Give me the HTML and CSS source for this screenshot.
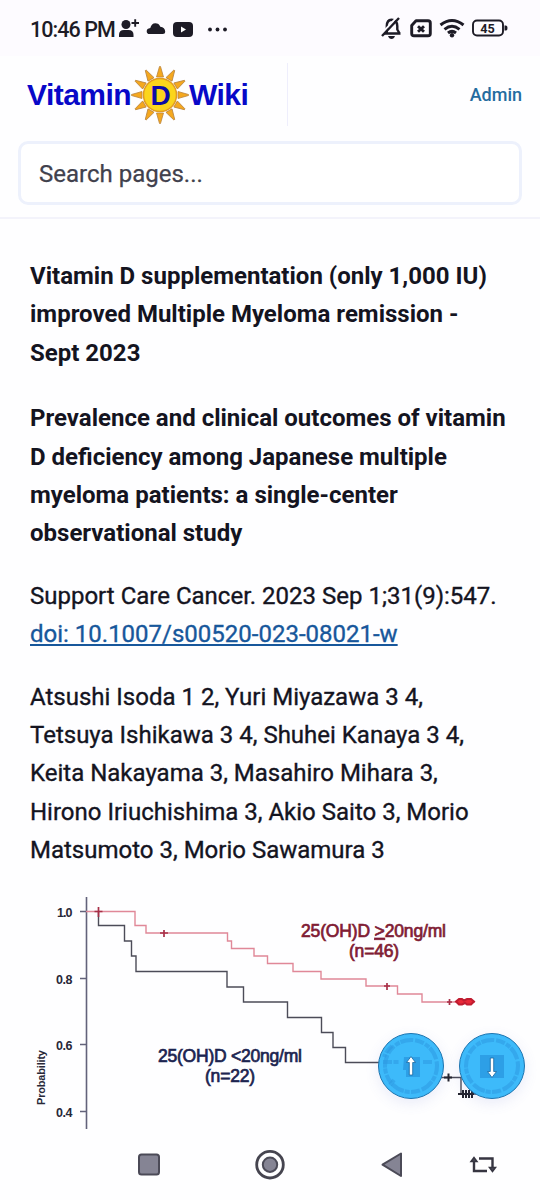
FILE: index.html
```html
<!DOCTYPE html>
<html lang="en">
<head>
    <meta charset="UTF-8">
    <meta name="viewport" content="width=device-width, initial-scale=1.0">
    <title>Vitamin D Wiki</title>
    <link rel="stylesheet" href="styles.css">
</head>
<body>
    <div class="status-bar">
        <span class="clock">10:46 PM</span>
        <svg class="status-left" width="112" height="24" viewBox="117 17 112 24">
            <circle cx="126" cy="24.500" r="4.500"/>
            <path d="M119 37v-2q0-5 5-5h4.500q5 0 5 5v2z"/>
            <path class="line thin" d="M131.500 23h7.500M135.200 19.200v7.600"/>
            <path d="M149.500 34q-2.800 0-2.800-2.800q0-2.700 3.600-3.200q1.200-4.700 5-4.700q3.700 0 5 3.400q4.700.6 4.900 4.800q0 2.500-2.500 2.500z"/>
            <rect x="173" y="22" width="20" height="15" rx="4"/>
            <path class="play" d="M181 26.500v6l5-3z"/>
            <circle cx="210" cy="29.500" r="1.900"/>
            <circle cx="217.500" cy="29.500" r="1.900"/>
            <circle cx="225" cy="29.500" r="1.900"/>
        </svg>
        <svg class="status-right" width="130" height="26" viewBox="380 17 130 26">
            <path class="line" d="M384 34.500h16.500M386.800 34v-7q0-6 4.700-6.300q5.500 0 5.800 6.300v3.500l2.300 4"/>
            <path d="M388 37h7q-1 3-3.500 3t-3.500-3z"/>
            <path class="gap" d="M381 35.500L397 18"/>
            <path class="line" d="M382 37L399 19"/>
            <path class="line bold" d="M416 21.800h12q2.300 0 2.300 2.300v10.400q0 2.300-2.300 2.300h-14q-2.300 0-2.300-2.300v-8z"/>
            <path class="line bold" d="M418 27.300l6 5.500M424 27.300l-6 5.500"/>
            <path class="wifi" d="M440.500 26q11.500-9 23 0M444.500 30.300q7.500-6 15 0M448 34q4-3.200 8 0"/>
            <circle cx="452" cy="36.200" r="2.200"/>
            <rect class="line thin" x="473" y="21.500" width="30" height="15" rx="4"/>
            <path d="M504.500 26.500h1.500q1.500 0 1.500 2.500t-1.500 2.500h-1.500z"/>
            <text x="480.300" y="33.800" textLength="14.500" lengthAdjust="spacingAndGlyphs">45</text>
        </svg>
    </div>

    <header class="site-header">
        <div class="top-row">
            <a class="logo" href="#">
                <span class="logo-vitamin">Vitamin</span>
                <svg class="sun" width="58" height="60" viewBox="-29 -30 58 60">
                    <defs><path id="ray" d="M-3.500-18L-.5-28.500L.5-28.500L3.500-18z"/></defs>
                    <g class="rays">
                        <use href="#ray"/>
                        <use href="#ray" transform="rotate(30)"/>
                        <use href="#ray" transform="rotate(60)"/>
                        <use href="#ray" transform="rotate(90)"/>
                        <use href="#ray" transform="rotate(120)"/>
                        <use href="#ray" transform="rotate(150)"/>
                        <use href="#ray" transform="rotate(180)"/>
                        <use href="#ray" transform="rotate(210)"/>
                        <use href="#ray" transform="rotate(240)"/>
                        <use href="#ray" transform="rotate(270)"/>
                        <use href="#ray" transform="rotate(300)"/>
                        <use href="#ray" transform="rotate(330)"/>
                    </g>
                    <circle class="disc" r="16.500"/>
                    <text x=".5" y="9.500" text-anchor="middle">D</text>
                </svg>
                <span class="logo-wiki">Wiki</span>
            </a>
            <a class="admin" href="#">Admin</a>
        </div>
        <input class="search" type="text" placeholder="Search pages...">
    </header>

    <main class="content">
        <h1>Vitamin D supplementation (only 1,000 IU)<br>improved Multiple Myeloma remission -<br>Sept 2023</h1>
        <h2>Prevalence and clinical outcomes of vitamin<br>D deficiency among Japanese multiple<br>myeloma patients: a single-center<br>observational study</h2>
        <p class="source">Support Care Cancer. 2023 Sep 1;31(9):547.<br><a href="#">doi: 10.1007/s00520-023-08021-w</a></p>
        <p class="authors">Atsushi Isoda 1 2, Yuri Miyazawa 3 4,<br>Tetsuya Ishikawa 3 4, Shuhei Kanaya 3 4,<br>Keita Nakayama 3, Masahiro Mihara 3,<br>Hirono Iriuchishima 3, Akio Saito 3, Morio<br>Matsumoto 3, Morio Sawamura 3</p>
    </main>

    <div class="figure">
        <svg class="chart" width="540" height="260" viewBox="0 880 540 260">
            <path class="axis" d="M86.500 897v232M80 911.500h6M80 978.500h6M80 1044.500h6M80 1111.500h6"/>
            <g class="ticks">
                <text x="57" y="917" textLength="15.500">1.0</text>
                <text x="56" y="984" textLength="16.500">0.8</text>
                <text x="56" y="1050" textLength="16.500">0.6</text>
                <text x="56" y="1117" textLength="16.500">0.4</text>
            </g>
            <text class="y-title" transform="translate(45 1105) rotate(-90)" textLength="55">Probability</text>

            <!-- low vitamin D group -->
            <path class="low" d="M98.500 911V925.500H124.500V941H131.500V956H136V971.500H227V987H243.500V1002H287.500V1017.500H321.500V1032.500H333V1047.500H345.500V1062.500H415V1077.500H461V1094H476"/>
            <path class="low-marks" d="M448.500 1073.500v8M444 1077.500h8M463 1090v8M466 1090v8M469 1090v8M472 1090v8M458 1094h16"/>

            <!-- high vitamin D group -->
            <path class="high" d="M86 911.500H135V925.500H146V933H227.500V941H231.500V948.500H254V956H267.500V963.500H293V971.500H321V979H366V986H397.500V994H422V1002H475"/>
            <path class="high-marks" d="M98.500 907v10M94.500 911.500h8M164 930v7M160 933h8M387 983v7M384 986h6M449.500 999v6M447 1002h5"/>
            <path class="high-end" d="M456 1001.500l3-2.500h3l2 1.500l3-1.500h4l3 2.500l-3 3h-4l-2-1.500l-3 1.500h-3z"/>

            <text class="label high-label" x="301" y="937" textLength="145">25(OH)D <tspan text-decoration="underline">&gt;</tspan>20ng/ml</text>
            <text class="label high-label" x="349" y="957" textLength="50">(n=46)</text>
            <text class="label low-label" x="158" y="1062" textLength="144">25(OH)D &lt;20ng/ml</text>
            <text class="label low-label" x="205" y="1082" textLength="50">(n=22)</text>
        </svg>
        <div class="scroll-buttons">
            <button class="scroll-button" aria-label="Scroll up">
                <svg width="66" height="66" viewBox="-33 -33 66 66">
                    <path class="texture" d="M-28-4h16M12-4h10M-19-20q-6 5-8 11M-17 14l-4 5"/>
                    <circle class="ring" r="26"/>
                    <path class="patch" d="M-7-9H9V11H-5V4H-8z"/>
                    <path class="arrow" d="M0-9.500l4.500 6H1.700V9H-1.700V-3.500H-4.500z"/>
                </svg>
            </button>
            <button class="scroll-button" aria-label="Scroll down">
                <svg width="66" height="66" viewBox="-33 -33 66 66">
                    <circle class="ring" r="26"/>
                    <path class="patch" d="M-12-11H12V12H-12z"/>
                    <path class="arrow" d="M0 11.500l4.500-6H1.700V-8H-1.700V5.500H-4.500z"/>
                </svg>
            </button>
        </div>
    </div>

    <div class="nav-bar">
        <svg width="540" height="60" viewBox="0 1140 540 60">
            <rect class="soft" x="139" y="1154.500" width="20" height="20" rx="2.500"/>
            <circle class="outer" cx="270" cy="1164.700" r="13.300"/>
            <circle class="soft" cx="270" cy="1164.700" r="7.200"/>
            <path class="soft" d="M401 1153.500v22.500l-18.500-11.300z"/>
            <path class="rotate" d="M474 1160v11h13M479 1158.500h13.500v10"/>
            <path class="head" d="M474 1157.500l-3 4h6zM492.500 1171.500l-3-4h6z"/>
        </svg>
    </div>
</body>
</html>
```
FILE: styles.css
```css
* {
    box-sizing: border-box;
}

body {
    margin: 0;
    width: 540px;
    height: 1200px;
    overflow: hidden;
    background: #fefeff;
    color: #14141f;
    font-family: Roboto, sans-serif;
    display: flex;
    flex-direction: column;
}

.status-bar {
    height: 56px;
    flex: none;
    display: flex;
    align-items: center;
    padding: 2px 30px 0 30px;
    background: #fdfbff;
    fill: #1d1b26;
}

.clock {
    width: 87px;
    font-size: 21.5px;
    font-weight: 500;
    letter-spacing: -0.95px;
    color: #1d1b26;
    white-space: nowrap;
}

.status-right {
    margin-left: auto;
}

.status-right text {
    font-size: 13.5px;
    font-weight: 700;
}

.line {
    fill: none;
    stroke: #1d1b26;
    stroke-width: 2.4;
    stroke-linejoin: round;
}

.bold {
    stroke-width: 2.9;
}

.thin {
    stroke-width: 1.9;
}

.gap {
    stroke: #fdfbff;
    stroke-width: 2;
}

.wifi {
    fill: none;
    stroke: #1d1b26;
    stroke-width: 3;
}

.play {
    fill: #ffffff;
}

/* Header */
.site-header {
    height: 163px;
    flex: none;
    padding: 7px 18px 0;
    border-bottom: 2px solid #f3f3fb;
}

.top-row {
    height: 63px;
    display: flex;
    justify-content: space-between;
    align-items: center;
}

.logo {
    display: flex;
    align-items: center;
    width: 270px;
    height: 63px;
    padding-left: 9px;
    border-right: 1px solid #eeeefc;
    font-family: "Liberation Sans", sans-serif;
    font-size: 30px;
    font-weight: 700;
    letter-spacing: -0.55px;
    color: #0808c8;
    text-decoration: none;
}

.logo-vitamin {
    width: 104px;
}

.sun {
    flex: none;
}

.rays {
    fill: #f5a81e;
    stroke: #b98440;
    stroke-width: 0.8;
}

.disc {
    fill: #fbd51c;
    stroke: #e29b22;
    stroke-width: 1.5;
}

.sun text {
    font-size: 28px;
    letter-spacing: 0;
    fill: #0b0ba8;
}

.admin {
    color: #246ca0;
    font-size: 18px;
    font-weight: 500;
    text-decoration: none;
}

.search {
    display: block;
    width: 504px;
    height: 64px;
    margin-top: 15px;
    padding: 1px 18px 0;
    border: 3px solid #edf1fc;
    border-radius: 10px;
    background: #ffffff;
    font-family: Roboto, sans-serif;
    font-size: 24px;
}

.search::placeholder {
    color: #41414d;
    -webkit-text-stroke: 0.25px #41414d;
}

/* Article */
.content {
    height: 661px;
    flex: none;
    padding: 38px 30px 0;
    font-size: 24px;
    line-height: 38.4px;
    white-space: nowrap;
}

h1, h2 {
    margin: 0 0 27px;
    font-size: 24px;
    font-weight: 700;
}

h2 {
    margin-bottom: 24px;
}

p {
    margin: 0 0 24px;
    -webkit-text-stroke: 0.35px;
}

.content a {
    color: #17579b;
    text-decoration-thickness: 2px;
    text-underline-offset: 2px;
}

/* Survival chart */
.figure {
    position: relative;
    height: 260px;
    flex: none;
    font-family: "Liberation Sans", sans-serif;
}

.chart {
    display: block;
}

.chart path {
    fill: none;
}

.chart .axis {
    stroke: #62627a;
    stroke-width: 1.6;
}

.ticks, .y-title {
    font-size: 12.5px;
    font-weight: 700;
    fill: #282838;
}

.y-title {
    font-size: 11px;
}

.low {
    stroke: #4c4c58;
    stroke-width: 1.4;
}

.low-marks {
    stroke: #24242e;
    stroke-width: 2;
}

.high {
    stroke: #e08898;
    stroke-width: 1.4;
}

.high-marks {
    stroke: #a83048;
    stroke-width: 1.7;
}

.chart .high-end {
    fill: #e82838;
    stroke: #c01c30;
    stroke-width: 2;
}

.label {
    font-size: 17.5px;
    stroke-width: 0.7;
}

.high-label {
    fill: #801c34;
    stroke: #801c34;
}

.low-label {
    fill: #1c2450;
    stroke: #1c2450;
}

/* Buttons floating over the chart */
.scroll-buttons {
    position: absolute;
    right: 15px;
    top: 153px;
    display: flex;
    gap: 15px;
}

.scroll-button {
    width: 66px;
    height: 66px;
    padding: 0;
    border: 1.5px solid #1d75b0;
    border-radius: 50%;
    background: #3dbafa;
    box-shadow: 0 4px 14px rgba(80, 100, 200, 0.12);
    display: flex;
    align-items: center;
    justify-content: center;
}

.scroll-button svg {
    flex: none;
}

.ring, .texture {
    fill: none;
    stroke: #2c95df;
    stroke-width: 4;
    stroke-dasharray: 9 1.5 5 1 13 2;
    opacity: 0.5;
}

.patch {
    fill: #2590dc;
    opacity: 0.65;
}

.arrow {
    fill: #ffffff;
    stroke: #17679f;
    stroke-width: 0.8;
}

.nav-bar {
    height: 60px;
    flex: none;
}

.soft {
    fill: #858494;
    stroke: #4b4a57;
    stroke-width: 2;
    stroke-linejoin: round;
}

.outer {
    fill: none;
    stroke: #45444f;
    stroke-width: 2.8;
}

.rotate {
    fill: none;
    stroke: #363541;
    stroke-width: 2.4;
}

.head {
    fill: #4b4a57;
    stroke: #363541;
    stroke-width: 1.5;
}
```
